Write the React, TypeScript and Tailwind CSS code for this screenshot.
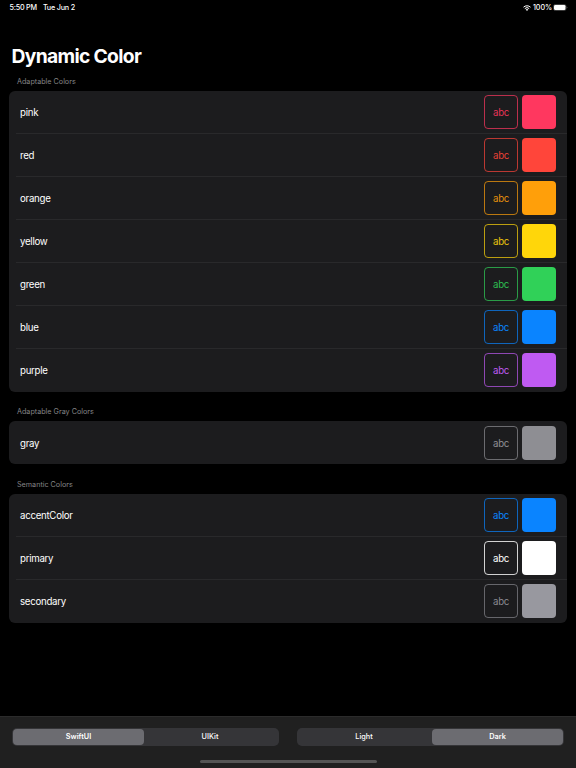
import clsx from 'clsx';

interface Swatch {
  name: string;
  box: string;
  fill: string;
}

interface Section {
  title: string;
  header: string;
  nudge?: string;
  swatches: Swatch[];
}

const sections: Section[] = [
  {
    title: 'Adaptable Colors',
    header: 'h-[21px] pt-[3px]',
    swatches: [
      { name: 'pink', box: 'border-[#ff375f]/70 text-[#ff375f]/90', fill: 'bg-[#ff375f]' },
      { name: 'red', box: 'border-[#ff453a]/70 text-[#ff453a]/90', fill: 'bg-[#ff453a]' },
      { name: 'orange', box: 'border-[#ff9f0a]/70 text-[#ff9f0a]/90', fill: 'bg-[#ff9f0a]' },
      { name: 'yellow', box: 'border-[#ffd60a]/70 text-[#ffd60a]/90', fill: 'bg-[#ffd60a]' },
      { name: 'green', box: 'border-[#30d158]/70 text-[#30d158]/90', fill: 'bg-[#30d158]' },
      { name: 'blue', box: 'border-[#0a84ff]/70 text-[#0a84ff]', fill: 'bg-[#0a84ff]' },
      { name: 'purple', box: 'border-[#bf5af2]/70 text-[#bf5af2]', fill: 'bg-[#bf5af2]' },
    ],
  },
  {
    title: 'Adaptable Gray Colors',
    header: 'h-[29px] pt-[11px]',
    nudge: 'pt-px',
    swatches: [
      { name: 'gray', box: 'border-[#8e8e93]/70 text-[#8e8e93]', fill: 'bg-[#8e8e93]' },
    ],
  },
  {
    title: 'Semantic Colors',
    header: 'h-[29.5px] pt-[11.5px]',
    swatches: [
      { name: 'accentColor', box: 'border-[#0a84ff]/70 text-[#0a84ff]', fill: 'bg-[#0a84ff]' },
      { name: 'primary', box: 'border-white/80 text-white', fill: 'bg-white' },
      { name: 'secondary', box: 'border-[#98989f]/60 text-[#98989f]/90', fill: 'bg-[#98989f]' },
    ],
  },
];

function StatusBar() {
  return (
    <div className="flex h-[14px] items-center justify-between pl-[9.5px] pr-[8px] pt-px text-[7.2px] font-medium leading-[13px] text-white">
      <div className="flex gap-[6px] tracking-[-0.2px]">
        <span className="tracking-[-0.2px]">5:50 PM</span>
        <span>Tue Jun 2</span>
      </div>
      <div className="flex items-center">
        <svg className="mr-[2px] h-[6px] w-[8px]" viewBox="0 0 16 12" fill="none" stroke="white" strokeWidth="2">
          <path d="M1 4.4a10 10 0 0 1 14 0" />
          <path d="M3.6 7.2a6.3 6.3 0 0 1 8.8 0" />
          <path d="M8 11.8 5.4 9.2a3.7 3.7 0 0 1 5.2 0z" fill="white" stroke="none" />
        </svg>
        <span className="tracking-[-0.1px]">100%</span>
        <svg className="ml-[1px] h-[7px] w-[15px]" viewBox="0 0 30 14">
          <rect x="1" y="1" width="25" height="12" rx="3.5" fill="none" stroke="#777" />
          <rect x="2" y="2" width="23" height="10" rx="2.5" fill="white" />
          <path d="M27.5 5v4c1.6-.6 1.6-3.4 0-4z" fill="#888" />
        </svg>
      </div>
    </div>
  );
}

function SwatchRow({ swatch, last, nudge }: { swatch: Swatch; last: boolean; nudge?: string }) {
  return (
    <div className="flex h-[43px] pl-[7px]">
      <div
        className={clsx(
          'flex flex-1 items-center pl-[4px] pr-[11px]',
          last ? nudge ?? 'pb-px' : 'border-b border-[#29292b]'
        )}
      >
        <span className="flex-1 pt-px text-[9.7px] leading-[15px] tracking-[-0.28px] text-white">{swatch.name}</span>
        <div
          className={clsx(
            'mr-[4px] flex size-[34px] items-center justify-center rounded-[4px] border pt-px text-[9.7px] leading-[15px] tracking-[-0.35px]',
            swatch.box
          )}
        >
          abc
        </div>
        <div className={clsx('size-[34px] rounded-[4px]', swatch.fill)} />
      </div>
    </div>
  );
}

function SegmentedControl({ options, selected }: { options: string[]; selected: string }) {
  return (
    <div className="flex h-[18px] flex-1 rounded-[5px] bg-[#353538] p-[1px]">
      {options.map(option => (
        <div
          key={option}
          className={clsx(
            'flex items-center justify-center rounded-[4px] pt-px text-[7.3px] text-white',
            option === selected ? 'w-[131px] bg-[#6c6c71] font-semibold' : 'flex-1 pr-[2px] font-medium'
          )}
        >
          {option}
        </div>
      ))}
    </div>
  );
}

export default function App() {
  return (
    <div className="flex h-[768px] w-[576px] flex-col overflow-hidden bg-black font-['Inter',sans-serif] antialiased">
      <StatusBar />
      <h1 className="mt-[28px] h-[28px] pl-[11.5px] text-[19.3px] font-bold leading-[28px] tracking-[-0.68px] text-white">
        Dynamic Color
      </h1>

      <main className="flex-1 px-[9px]">
        {sections.map(section => (
          <section key={section.title}>
            <h2 className={clsx('pl-[8px] text-[7.2px] leading-[18px] text-[#858587]', section.header)}>
              {section.title}
            </h2>
            <div className="overflow-hidden rounded-[6px] bg-[#1c1c1e]">
              {section.swatches.map((swatch, i) => (
                <SwatchRow
                  key={swatch.name}
                  swatch={swatch}
                  nudge={section.nudge}
                  last={i === section.swatches.length - 1}
                />
              ))}
            </div>
          </section>
        ))}
      </main>

      {/* Bottom toolbar */}
      <footer className="flex h-[52px] flex-col items-center border-t border-[#2b2b2b] bg-[#202020]">
        <div className="flex w-full gap-[18px] pl-[12px] pr-[12px] pt-[11px]">
          <SegmentedControl options={['SwiftUI', 'UIKit']} selected="SwiftUI" />
          <SegmentedControl options={['Light', 'Dark']} selected="Dark" />
        </div>
        <div className="mt-[14px] h-[3px] w-[177px] rounded-full bg-[#555]" />
      </footer>
    </div>
  );
}
